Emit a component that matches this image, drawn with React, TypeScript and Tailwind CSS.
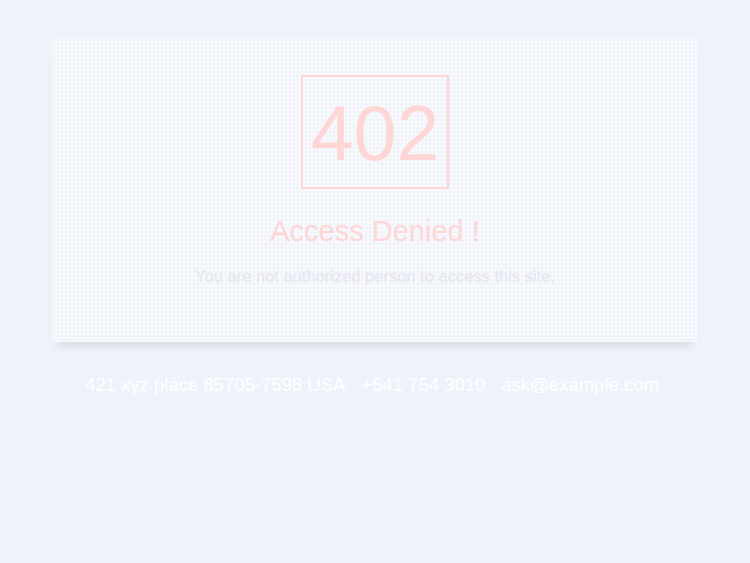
export default function App() {
  return (
    <div className="min-h-screen bg-[#eef2fb] px-[52px] pt-[38px] font-['Liberation_Sans',Arial,sans-serif] leading-[normal]">
      <div className="flex flex-col items-center bg-[#f7f8fc] bg-[radial-gradient(#edf0f8_0.8px,transparent_1px)] bg-[length:4px_4px] pt-[37px] pb-[56px] shadow-[0_9px_10px_-6px_rgba(0,0,0,0.12)]">
        <div className="border-2 border-[#ffd6d6] px-[8px] pt-[18px] pb-[15px] text-[77px] leading-none text-[#ffd6d6]">
          402
        </div>
        <h1 className="mt-[26px] text-[29px] text-[#ffd6d6]">Access Denied !</h1>
        <p className="mt-[19px] text-[16.5px] text-[#e4e5ee]">
          You are not authorized person to access this site.
        </p>
      </div>

      <div className="mt-[32px] flex justify-center gap-[16px] pr-[6px] text-[18.5px] text-white">
        <span>421 xyz place 85705-7598 USA</span>
        <span>+541 754 3010</span>
        <span>ask@example.com</span>
      </div>
    </div>
  )
}
